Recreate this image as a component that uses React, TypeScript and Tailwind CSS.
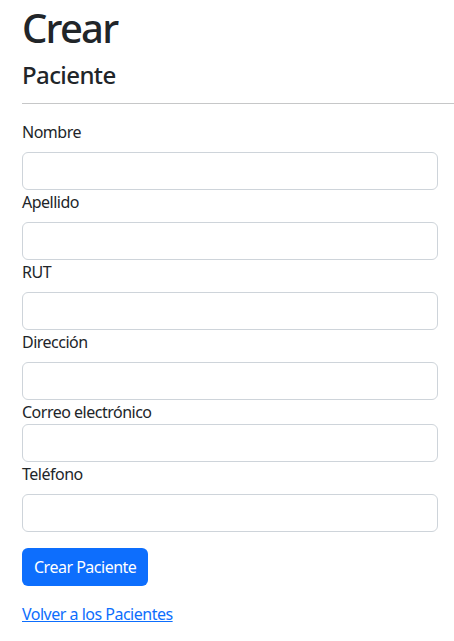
import React from "react";

const fields = [
  { label: "Nombre", gap: true },
  { label: "Apellido", gap: true },
  { label: "RUT", gap: true },
  { label: "Dirección", gap: true },
  { label: "Correo electrónico", gap: false },
  { label: "Teléfono", gap: true },
];

export default function App() {
  return (
    <div
      className="min-h-[641px] bg-white pl-[22px] text-[#212529] text-[16px] leading-[24px] tracking-[-0.5px]"
      style={{ fontFamily: '"Noto Sans", "Open Sans", sans-serif' }}
    >
      <h1 className="text-[40px] leading-[48px] font-medium pt-[4px] mb-[8px] tracking-[-1.8px]">Crear</h1>
      <h4 className="text-[24px] leading-[29px] font-medium tracking-[-0.6px]">Paciente</h4>
      <hr className="mt-[14px] mb-[16px] border-t border-[#c6c7c8]" />
      <div className="w-[416px]">
        {fields.map((f) => (
          <div key={f.label}>
            <label className={`block ${f.gap ? "mb-[8px]" : "mb-0"}`}>{f.label}</label>
            <input
              type="text"
              className="block w-full h-[38px] rounded-[6px] border border-[#ced4da] bg-white px-3"
            />
          </div>
        ))}
        <button className="mt-[16px] h-[38px] rounded-[6px] bg-[#0d6efd] px-[12px] text-white">
          Crear Paciente
        </button>
      </div>
      <div className="mt-[16px]">
        <a href="#" className="text-[#0d6efd] underline">
          Volver a los Pacientes
        </a>
      </div>
    </div>
  );
}
